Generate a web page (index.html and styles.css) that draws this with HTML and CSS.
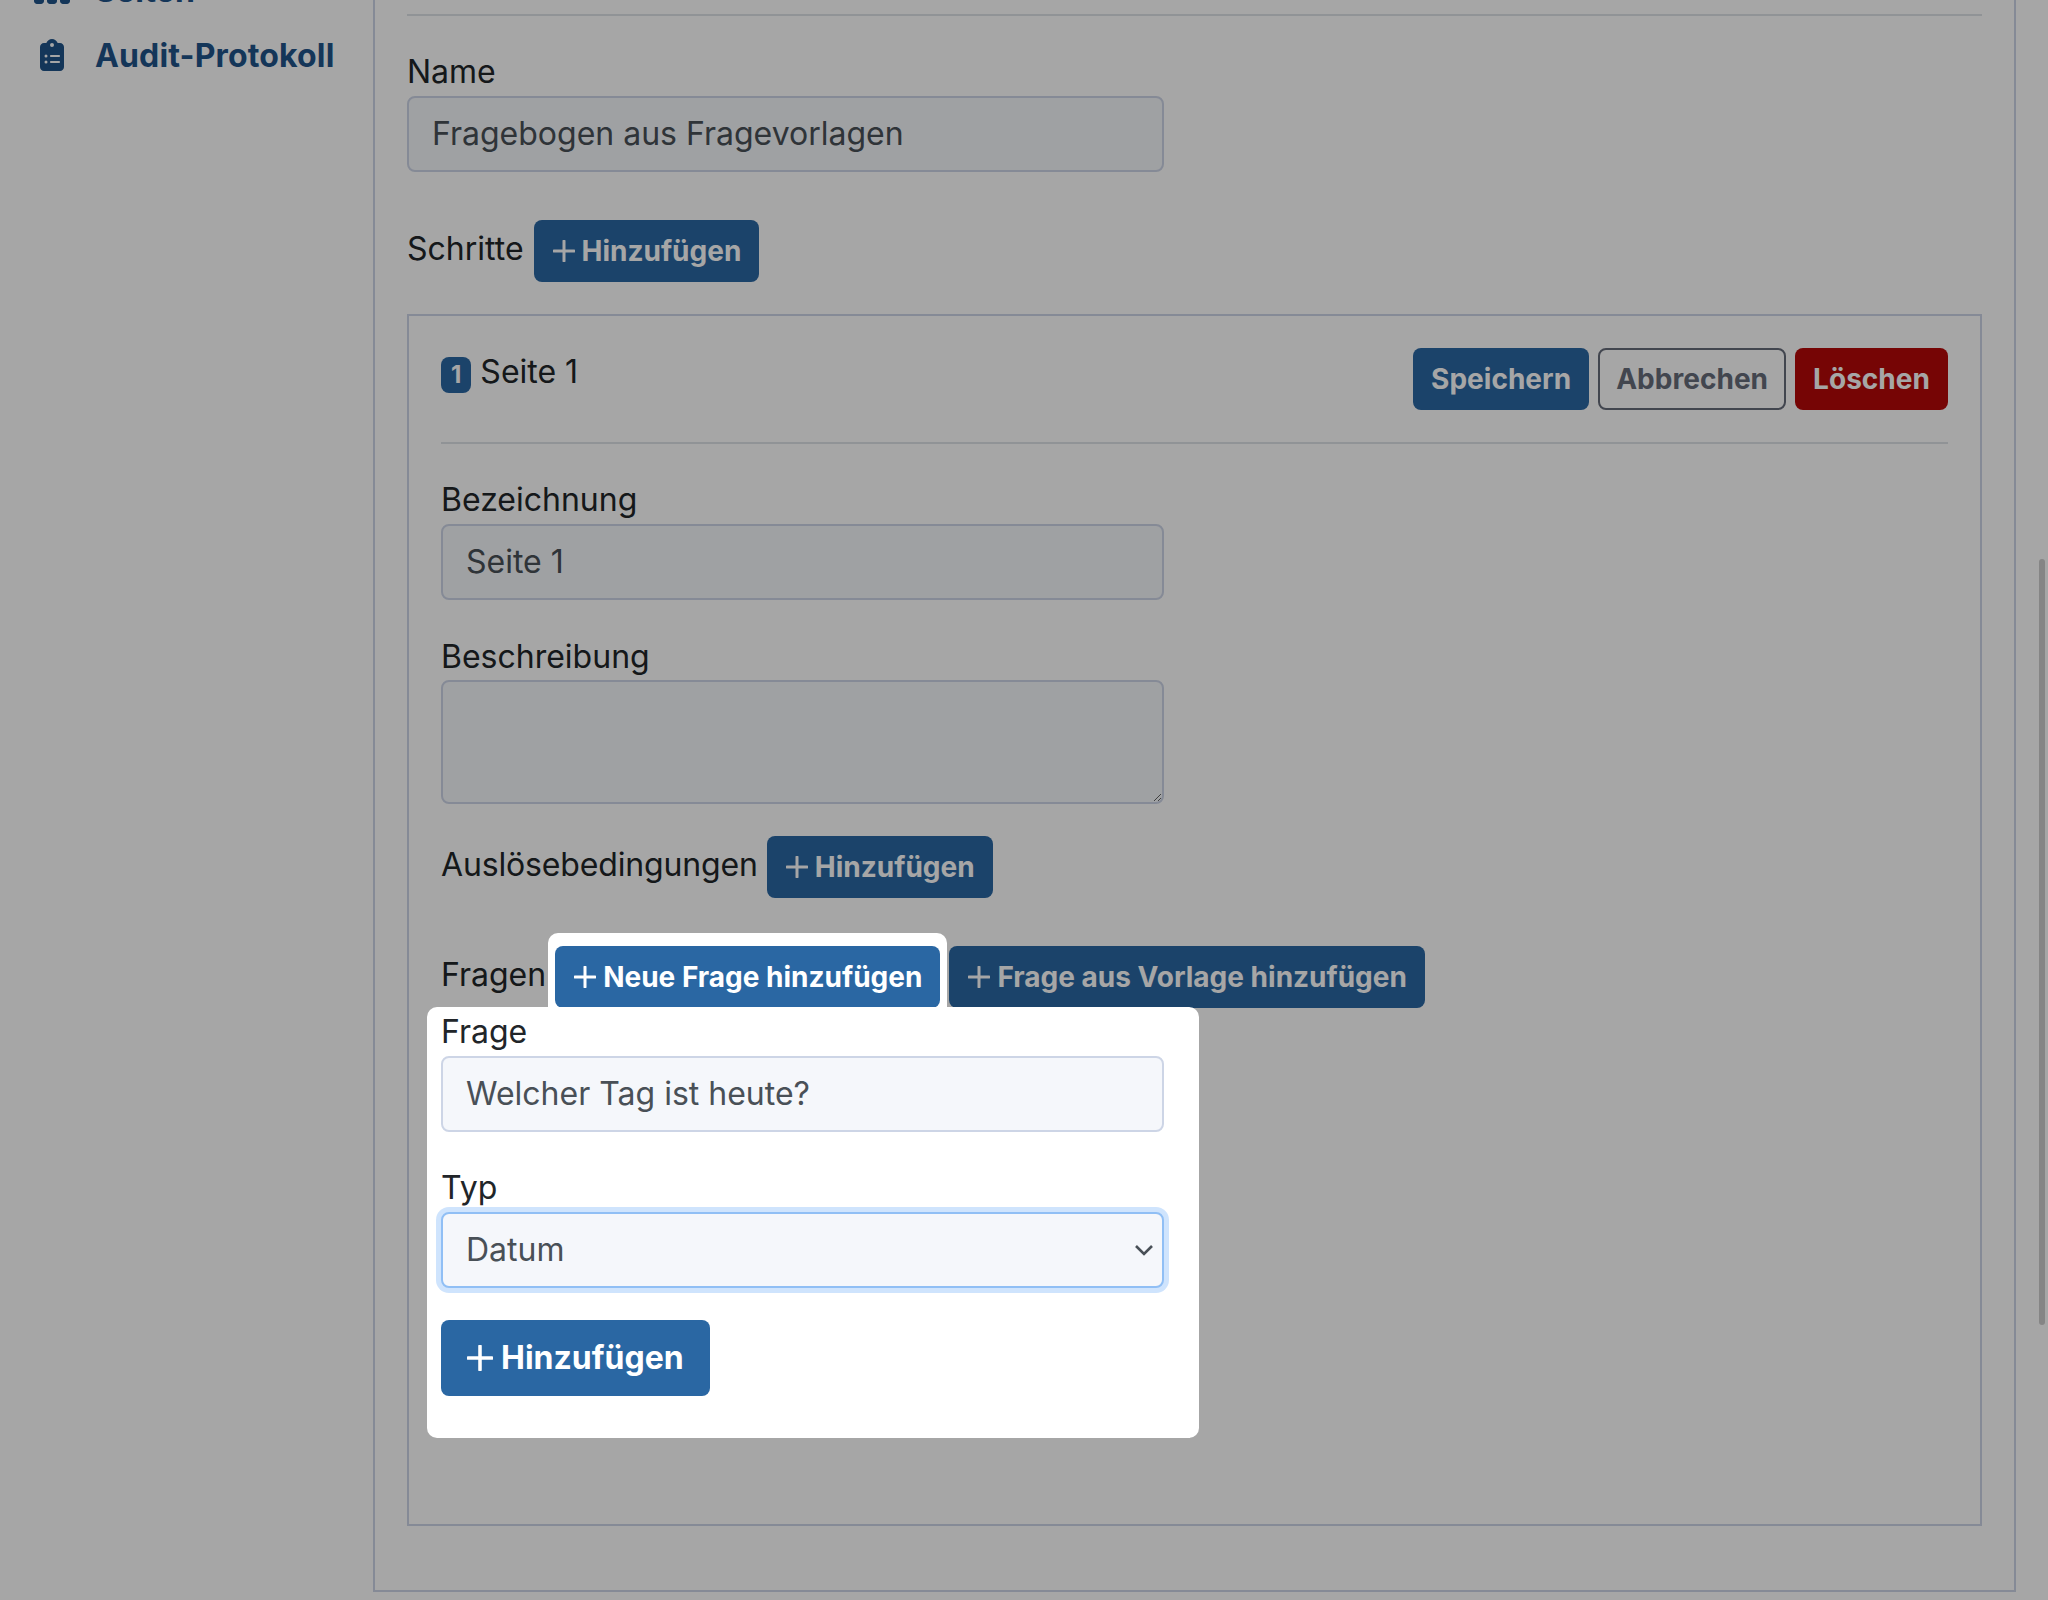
FILE: index.html
```html
<!DOCTYPE html>
<html lang="de">
<head>
  <meta charset="UTF-8">
  <title>Fragebogen aus Fragevorlagen</title>
  <link rel="stylesheet" href="styles.css">
</head>
<body>
  <div class="page">
    <!-- Seitenleiste -->
    <nav class="sidebar">
      <a class="nav-item" href="#">
        <span class="nav-icon">
          <svg class="icon-sitemap" viewBox="0 0 576 512"><path d="M208 80c0-26.5 21.5-48 48-48h64c26.5 0 48 21.5 48 48v64c0 26.5-21.5 48-48 48h-8v40H464c30.9 0 56 25.1 56 56v32h8c26.5 0 48 21.5 48 48v64c0 26.5-21.5 48-48 48H464c-26.5 0-48-21.5-48-48V368c0-26.5 21.5-48 48-48h8V288c0-4.4-3.6-8-8-8H312v40h8c26.5 0 48 21.5 48 48v64c0 26.5-21.5 48-48 48H256c-26.5 0-48-21.5-48-48V368c0-26.5 21.5-48 48-48h8V280H112c-4.4 0-8 3.6-8 8v32h8c26.5 0 48 21.5 48 48v64c0 26.5-21.5 48-48 48H48c-26.5 0-48-21.5-48-48V368c0-26.5 21.5-48 48-48h8V288c0-30.9 25.1-56 56-56H264V192h-8c-26.5 0-48-21.5-48-48V80z"/></svg>
        </span>
        Seiten
      </a>
      <a class="nav-item" href="#">
        <span class="nav-icon">
          <svg class="icon-clipboard" viewBox="0 0 384 512"><path d="M192 0c-41.8 0-77.4 26.7-90.5 64H64C28.7 64 0 92.7 0 128V448c0 35.3 28.7 64 64 64H320c35.3 0 64-28.7 64-64V128c0-35.3-28.7-64-64-64H282.5C269.4 26.7 233.8 0 192 0zm0 64a32 32 0 1 1 0 64 32 32 0 1 1 0-64zM72 272a24 24 0 1 1 48 0 24 24 0 1 1 -48 0zm104-16H304c8.8 0 16 7.2 16 16s-7.2 16-16 16H176c-8.8 0-16-7.2-16-16s7.2-16 16-16zM72 368a24 24 0 1 1 48 0 24 24 0 1 1 -48 0zm88 0c0-8.8 7.2-16 16-16H304c8.8 0 16 7.2 16 16s-7.2 16-16 16H176c-8.8 0-16-7.2-16-16z"/></svg>
        </span>
        Audit-Protokoll
      </a>
    </nav>

    <!-- Hauptbereich -->
    <main class="main">
      <hr class="rule">

      <div class="field field-wide">
        <label class="field-label">Name</label>
        <input class="control" type="text" value="Fragebogen aus Fragevorlagen">
      </div>

      <div class="title-row steps-row">
        <span class="row-label">Schritte</span>
        <button class="btn btn-sm btn-primary"><svg class="plus" viewBox="0 0 22 22"><path d="M11 1v20M1 11h20"/></svg>Hinzufügen</button>
      </div>

      <section class="step-box">
        <div class="step-head">
          <div class="step-title"><span class="badge">1</span> Seite 1</div>
          <div class="step-actions">
            <button class="btn btn-sm btn-primary">Speichern</button>
            <button class="btn btn-sm btn-outline">Abbrechen</button>
            <button class="btn btn-sm btn-danger">Löschen</button>
          </div>
        </div>
        <hr class="rule step-rule">

        <div class="field">
          <label class="field-label">Bezeichnung</label>
          <input class="control" type="text" value="Seite 1">
        </div>

        <div class="field">
          <label class="field-label">Beschreibung</label>
          <textarea class="control control-area"></textarea>
        </div>

        <div class="title-row trigger-row">
          <span class="row-label tight">Auslösebedingungen</span>
          <button class="btn btn-sm btn-primary"><svg class="plus" viewBox="0 0 22 22"><path d="M11 1v20M1 11h20"/></svg>Hinzufügen</button>
        </div>

        <div class="title-row questions-row">
          <span class="row-label">Fragen</span>
          <span class="spot">
            <button class="btn btn-sm btn-primary"><svg class="plus" viewBox="0 0 22 22"><path d="M11 1v20M1 11h20"/></svg>Neue Frage hinzufügen</button>
          </span>
          <button class="btn btn-sm btn-primary"><svg class="plus" viewBox="0 0 22 22"><path d="M11 1v20M1 11h20"/></svg>Frage aus Vorlage hinzufügen</button>
        </div>

        <!-- hervorgehobenes Formular -->
        <div class="question-form">
          <div class="field field-first">
            <label class="field-label">Frage</label>
            <input class="control" type="text" value="Welcher Tag ist heute?">
          </div>
          <div class="field">
            <label class="field-label">Typ</label>
            <select class="control control-select">
              <option>Datum</option>
            </select>
          </div>
          <button class="btn btn-primary"><svg class="plus plus-lg" viewBox="0 0 22 22"><path d="M11 1v20M1 11h20"/></svg>Hinzufügen</button>
        </div>
      </section>
    </main>
  </div>

  <div class="scroll-thumb"></div>
  <div class="backdrop"></div>
</body>
</html>
```

FILE: styles.css
```css
html, body {
  height: 1600px;
  overflow: hidden;
}
body {
  margin: 0;
  background: #fff;
  color: #212529;
  font-family: Inter, "Liberation Sans", sans-serif;
  font-size: 32px;
  line-height: 48px;
}

/* Seite ist gescrollt, darum der negative Rand */
.page {
  display: flex;
  align-items: flex-start;
  margin-top: -40px;
}
.sidebar {
  width: 373px;
  flex-shrink: 0;
  padding: 7px 0 0 28px;
  box-sizing: border-box;
}
.nav-item {
  display: flex;
  align-items: center;
  gap: 19px;
  margin-bottom: 17px;
  color: #1f5389;
  font-weight: 700;
  letter-spacing: 0.15px;
  text-decoration: none;
  white-space: nowrap;
}
.nav-icon {
  width: 48px;
  display: flex;
  justify-content: center;
  margin-top: -2px;
}
.nav-icon svg { fill: #1f5389; display: block; }
.icon-sitemap { width: 36px; height: 32px; }
.icon-clipboard { width: 24px; height: 32px; }

.main {
  width: 1643px;
  box-sizing: border-box;
  padding: 54px 32px 64px 32px;
  border: solid #cdd5e6;
  border-width: 0 2px 2px 2px;
}
.rule {
  height: 2px;
  margin: 0 0 32px 0;
  border: none;
  background: #dee2e6;
}

.field {
  width: 723px;
  margin-bottom: 32px;
}
.field-first { margin-bottom: 31px; }
.field-wide { width: 757px; }
.field-label {
  display: block;
  padding-top: 1px;
}
.field-wide .field-label { padding-top: 0; }
.control {
  display: block;
  width: 100%;
  height: 76px;
  box-sizing: border-box;
  padding: 0 24px 2px 23px;
  border: 2px solid #cdd5e6;
  border-radius: 8px;
  background: #f5f7fb;
  color: #495057;
  font-family: inherit;
  font-size: 32px;
}
.control-area {
  height: 124px;
  margin-top: -1px;
  padding: 12px 24px;
}
.control-select {
  appearance: none;
  border-color: #90bff5;
  box-shadow: 0 0 0 5px #cfe4fd;
  background-image: url("data:image/svg+xml,%3Csvg xmlns='http://www.w3.org/2000/svg' viewBox='0 0 20 12'%3E%3Cpath d='M2 2l8 8 8-8' fill='none' stroke='%23495057' stroke-width='2.6'/%3E%3C/svg%3E");
  background-repeat: no-repeat;
  background-position: right 8px center;
  background-size: 20px 12px;
}

.title-row {
  display: flex;
  align-items: flex-start;
  gap: 9px;
}
.row-label { margin-top: 5px; }
.steps-row { margin: 48px 0 32px 0; gap: 10px; }
.trigger-row { margin-bottom: 48px; }
.tight { letter-spacing: -0.15px; }

.btn {
  display: inline-flex;
  align-items: center;
  box-sizing: border-box;
  padding: 12px 24px;
  border: 2px solid transparent;
  border-radius: 8px;
  font-family: inherit;
  font-size: 32px;
  font-weight: 700;
  line-height: 48px;
  white-space: nowrap;
}
.btn-sm {
  padding: 8px 16px;
  font-size: 28px;
  line-height: 42px;
}
.btn-primary { background: #2a67a3; color: #fff; }
.btn-danger { background: #b50808; color: #fff; }
.btn-outline { background: transparent; border-color: #666c7a; color: #666c7a; }

.plus {
  width: 22px;
  height: 22px;
  margin: 0 7px 0 1px;
  fill: none;
  stroke: currentColor;
  stroke-width: 3;
  stroke-linecap: round;
}
.plus-lg { width: 26px; height: 26px; margin: 0 8px 0 0; }

.step-box {
  padding: 32px 32px 86px 32px;
  border: 2px solid #cdd5e6;
}
.step-head {
  display: flex;
  justify-content: space-between;
  align-items: flex-start;
}
.step-actions {
  display: flex;
  gap: 9px;
}
.step-actions .btn { letter-spacing: 0.03px; }
.badge {
  display: inline-block;
  padding: 6px 10px;
  border-radius: 8px;
  background: #2a67a3;
  color: #fff;
  font-size: 24px;
  font-weight: 700;
  line-height: 24px;
}
.step-rule { margin: 32px 0 31px 0; }

/* Abdunkelung und die hellen Ausschnitte darueber */
.backdrop {
  position: fixed;
  inset: 0;
  z-index: 10;
  background: rgba(0, 0, 0, 0.35);
}
.spot {
  position: relative;
  z-index: 11;
  display: block;
  margin: -13px -7px 0 -7px;
  padding: 13px 7px 0 7px;
  border-radius: 10px 10px 0 0;
  background: #fff;
}
.question-form {
  position: relative;
  z-index: 11;
  width: 772px;
  box-sizing: border-box;
  margin: -1px 0 0 -14px;
  padding: 0 35px 42px 14px;
  border-radius: 10px;
  background: #fff;
}

.scroll-thumb {
  position: absolute;
  top: 559px;
  left: 2039px;
  width: 6px;
  height: 766px;
  border-radius: 3px;
  background: #cdcdcd;
}
```
